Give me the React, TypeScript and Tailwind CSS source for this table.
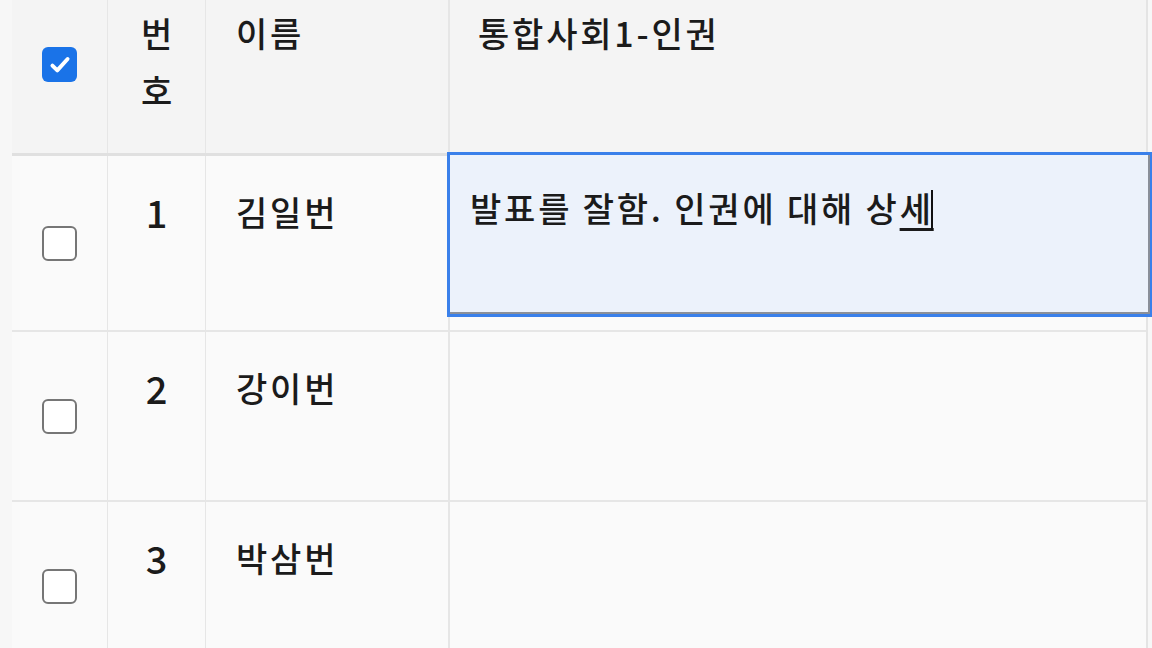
import { useState } from 'react';

interface Student {
  no: number;
  name: string;
  comment: string;
}

const STUDENTS: Student[] = [
  { no: 1, name: '김일번', comment: '발표를 잘함. 인권에 대해 상세' },
  { no: 2, name: '강이번', comment: '' },
  { no: 3, name: '박삼번', comment: '' },
];

function Checkbox({ checked }: { checked: boolean }) {
  return checked ? (
    <div className="w-[35px] h-[35px] rounded-[6px] bg-[#1a73e8] flex items-center justify-center">
      <svg width="26" height="26" viewBox="0 0 24 24" fill="none">
        <path d="M5 12.5l4.5 4.5L19 6.5" stroke="white" strokeWidth="3.6" strokeLinecap="round" strokeLinejoin="round" />
      </svg>
    </div>
  ) : (
    <div className="w-[35px] h-[35px] rounded-[6px] border-[2.5px] border-[#767676] bg-white" />
  );
}

export default function App() {
  const [selected] = useState(true);

  return (
    <div className="w-[1152px] h-[648px] overflow-hidden bg-[#f7f7f7] text-[#1b1b1b] font-medium" style={{ fontFamily: '"Noto Sans CJK KR", "Noto Sans", sans-serif' }}>
      <div className="ml-[12px] w-[1136px] border-r-2 border-[#e4e4e4]">
        {/* 헤더 */}
        <div className="grid grid-cols-[95px_98px_243px_700px] h-[156px] bg-[#f4f4f4] border-b-[3px] border-[#e0e0e0] text-[34px] tracking-[2.8px] leading-[57px]">
          <div className="flex justify-center pt-[47px]">
            <Checkbox checked={selected} />
          </div>
          <div className="border-l border-[#e6e6e6] flex flex-col items-center pt-[4px] pl-[3px]">
            <span>번</span>
            <span>호</span>
          </div>
          <div className="border-l border-[#e6e6e6] pl-[30px] pt-[4px]">이름</div>
          <div className="border-l-2 border-[#e6e6e6] pl-[28px] pt-[4px]">통합사회1-인권</div>
        </div>

        {/* 학생 목록 */}
        {STUDENTS.map((s, i) => (
          <div key={s.no} className={`grid grid-cols-[95px_98px_243px_700px] bg-[#fafafa] border-b-2 border-[#e6e6e6] text-[34px] tracking-[2.8px] leading-[57px] ${i === 0 ? 'h-[176px]' : 'h-[170px]'}`}>
            <div className="flex items-center justify-center">
              <Checkbox checked={false} />
            </div>
            <div className="border-l border-[#e6e6e6] text-center pt-[27px] text-[38px] tracking-normal">{s.no}</div>
            <div className="border-l border-[#e6e6e6] pl-[30px] pt-[27px]">{s.name}</div>
            <div className="border-l-2 border-[#e6e6e6] relative">
              {i === 0 && (
                <div className="absolute top-[-4px] left-[-3px] right-[-5px] h-[165px] border-[3px] border-[#3a80ea] bg-[#ecf2fb] pl-[20px] pt-[24px] shadow-[inset_-2px_-2px_0_#8a8f99]">
                  <span>발표를 잘함. 인권에 대해 상</span>
                  <span className="underline decoration-[3px] underline-offset-[6px]">세</span>
                  <span className="inline-block w-[2px] h-[40px] bg-[#111] align-[-8px] -ml-[3px]" />
                </div>
              )}
            </div>
          </div>
        ))}
      </div>
    </div>
  );
}
